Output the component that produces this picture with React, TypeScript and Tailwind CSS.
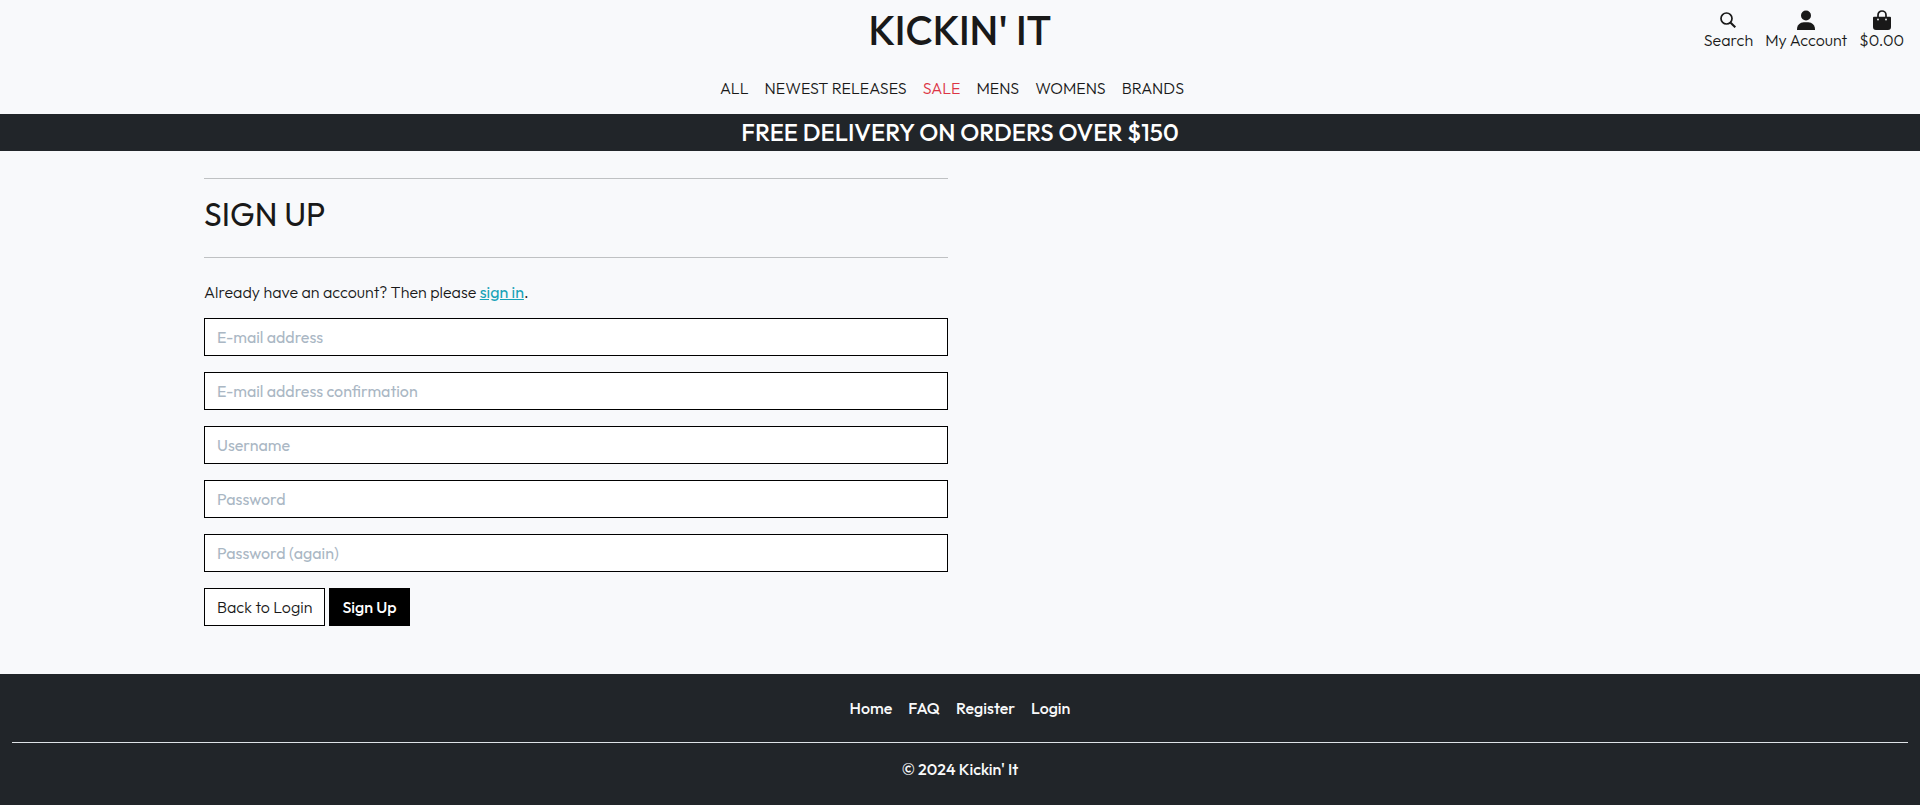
const navLinks = ['All', 'Newest Releases', 'Sale', 'Mens', 'Womens', 'Brands'];

const fields = [
  { id: 'email', label: 'E-mail address', type: 'email' },
  { id: 'email2', label: 'E-mail address confirmation', type: 'email' },
  { id: 'username', label: 'Username', type: 'text' },
  { id: 'password1', label: 'Password', type: 'password' },
  { id: 'password2', label: 'Password (again)', type: 'password' },
];

const footerLinks = ['Home', 'FAQ', 'Register', 'Login'];

function SearchIcon() {
  return (
    <svg viewBox="0 0 16 16" className="size-4" fill="none" stroke="currentColor" strokeWidth="1.7" aria-hidden="true">
      <circle cx="6.5" cy="6.5" r="5.5" />
      <path d="M10.4 10.4 15.3 15.3" strokeWidth="2.1" />
    </svg>
  );
}

function UserIcon() {
  return (
    <svg viewBox="0 0 18 20" className="h-5 w-[18px]" fill="currentColor" aria-hidden="true">
      <circle cx="9" cy="5.5" r="5" />
      <path d="M0 20v-.6C0 15.3 3 12.3 6.8 12.3h4.4c3.8 0 6.8 3 6.8 7.1v.6Z" />
    </svg>
  );
}

function BagIcon() {
  return (
    <svg viewBox="0 0 18 20" className="h-5 w-[18px]" aria-hidden="true">
      <path d="M5 8V5a4 4 0 0 1 8 0V8" fill="none" stroke="currentColor" strokeWidth="1.7" />
      <path d="M0 7.7a1 1 0 0 1 1-1h16a1 1 0 0 1 1 1V17a3 3 0 0 1-3 3H3a3 3 0 0 1-3-3Z" fill="currentColor" />
      <circle cx="5" cy="9.5" r=".9" fill="#f8f9fb" />
      <circle cx="13" cy="9.5" r=".9" fill="#f8f9fb" />
    </svg>
  );
}

export default function App() {
  return (
    <div className="flex min-h-screen flex-col bg-[#f8f9fb] font-['Outfit','Lato',sans-serif] text-base leading-6 font-light text-[#191919]">
      <header>
        <div className="grid grid-cols-3 items-start px-4">
          <a href="#home" className="col-start-2 justify-self-center py-0.5 text-[40px] leading-[56px] font-medium">
            KICKIN' IT
          </a>
          <div className="flex gap-3 justify-self-end pt-[10px] leading-5">
            <a href="#search" className="flex flex-col items-center">
              <span className="flex h-5 items-center"><SearchIcon /></span>
              Search
            </a>
            <a href="#account" className="flex flex-col items-center">
              <UserIcon />
              My Account
            </a>
            <a href="#bag" className="flex flex-col items-center">
              <BagIcon />
              $0.00
            </a>
          </div>
        </div>
        <nav className="flex justify-center gap-4 pt-4 pr-4 pb-[14px] uppercase">
          {navLinks.map((name) => (
            <a key={name} href="#shop" className={name === 'Sale' ? 'text-[#dc3545]' : ''}>
              {name}
            </a>
          ))}
        </nav>
        <p className="bg-[#212529] py-1 text-center text-2xl leading-[29px] font-medium text-white">
          FREE DELIVERY ON ORDERS OVER $150
        </p>
      </header>

      <main className="mx-auto w-4/5 flex-1 pt-[27px] pb-12">
        <div className="w-1/2 px-3">
          <hr className="border-[#bfc1c3]" />
          <h1 className="pt-4 pb-6 text-[32px] leading-[38px] font-normal">SIGN UP</h1>
          <hr className="border-[#bfc1c3]" />
          <p className="pt-[22px] pb-[14px]">
            Already have an account? Then please{' '}
            <a href="#login" className="font-normal text-[#17a2b8] underline">sign in</a>.
          </p>
          <form className="flex flex-col gap-4">
            {fields.map((field) => (
              <input
                key={field.id}
                id={field.id}
                type={field.type}
                aria-label={field.label}
                placeholder={field.label}
                className="h-[38px] w-full border border-black bg-white px-3 font-normal placeholder:text-[#aab7c4]"
              />
            ))}
            <div className="flex gap-1">
              <a href="#login" className="border border-black bg-white px-3 py-[6px]">Back to Login</a>
              <button type="submit" className="border border-black bg-black px-3 py-[6px] font-medium text-white">
                Sign Up
              </button>
            </div>
          </form>
        </div>
      </main>

      <footer className="bg-[#212529] px-3 pb-6 font-medium text-[#f8f9fa]">
        <nav className="flex justify-center gap-4 border-b border-[#dee2e6] py-[22px]">
          {footerLinks.map((name) => (
            <a key={name} href="#footer">{name}</a>
          ))}
        </nav>
        <p className="pt-[14px] text-center">© 2024 Kickin' It</p>
      </footer>
    </div>
  );
}
